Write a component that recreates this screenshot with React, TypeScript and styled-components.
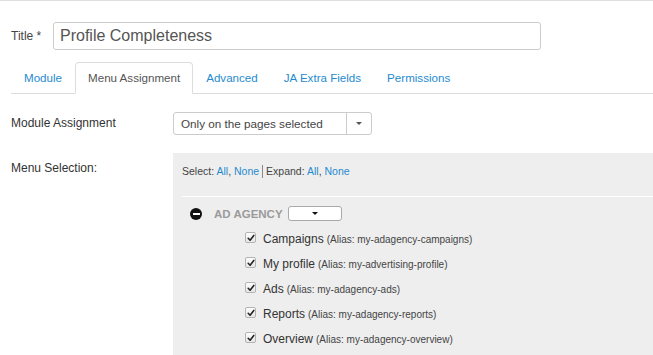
import React from 'react'
import styled, { createGlobalStyle } from 'styled-components'

const GlobalStyle = createGlobalStyle`
  html, body {
    margin: 0;
    padding: 0;
    background: #fff;
  }
  body {
    font-family: "Liberation Sans", Arial, sans-serif;
    color: #333;
    overflow: hidden;
  }
`

const Page = styled.div`
  border-top: 1px solid #dedede;
  padding-left: 11px;
  height: 354px;
  overflow: hidden;
`

const TitleRow = styled.div`
  display: flex;
  align-items: center;
  margin-top: 21px;

  label {
    width: 42px;
    font-size: 12px;
    color: #444;
  }

  input {
    box-sizing: border-box;
    width: 488px;
    height: 28px;
    border: 1px solid #ccc;
    border-radius: 3px;
    padding: 0 6px;
    font-family: inherit;
    font-size: 16px;
    color: #555;
    outline: none;
  }
`

const TabBar = styled.ul`
  display: flex;
  align-items: flex-start;
  list-style: none;
  margin: 12px 0 0;
  padding: 0;
  border-bottom: 1px solid #ddd;
  height: 31px;
`

const Tab = styled.li<{ $active?: boolean }>`
  box-sizing: border-box;
  height: ${(p) => (p.$active ? 32 : 31)}px;
  padding: 0 12px;
  line-height: 30px;
  font-size: 11.6px;
  cursor: pointer;
  color: ${(p) => (p.$active ? '#555' : '#1f8bd0')};
  border: 1px solid ${(p) => (p.$active ? '#ddd' : 'transparent')};
  border-bottom: ${(p) => (p.$active ? '1px solid #fff' : 'none')};
  border-radius: 4px 4px 0 0;
  background: ${(p) => (p.$active ? '#fff' : 'transparent')};
`

const FieldRow = styled.div<{ $top?: number }>`
  display: flex;
  align-items: flex-start;
  margin-top: ${(p) => p.$top ?? 18}px;
`

const FieldLabel = styled.div<{ $pad?: number }>`
  width: 162px;
  flex: none;
  font-size: 12px;
  color: #333;
  padding-top: ${(p) => p.$pad ?? 0}px;
`

const Select = styled.div`
  box-sizing: border-box;
  display: flex;
  width: 199px;
  height: 23px;
  border: 1px solid #ccc;
  border-radius: 3px;
  font-size: 11.7px;
  color: #444;

  .value {
    flex: 1;
    line-height: 21px;
    padding-left: 7px;
  }

  .toggle {
    width: 24px;
    border-left: 1px solid #ccc;
    display: flex;
    align-items: center;
    justify-content: center;
  }
`

const Caret = styled.span<{ $color?: string }>`
  width: 0;
  height: 0;
  border-left: 3px solid transparent;
  border-right: 3px solid transparent;
  border-top: 3px solid ${(p) => p.$color ?? '#555'};
`

const MenuPanel = styled.div`
  flex: 1;
  background: #eeeeee;
  padding-top: 10px;
  height: 210px;
`

const Links = styled.div`
  font-size: 10.5px;
  color: #444;
  line-height: 16px;
  padding-left: 9px;
  margin-bottom: 17px;

  a {
    color: #1f8bd0;
    text-decoration: none;
  }

  .sep {
    display: inline-block;
    width: 1px;
    height: 13px;
    background: #888;
    margin: 0 3px;
    vertical-align: -3px;
  }
`

const Tree = styled.div`
  margin-left: 9px;
  border-top: 1px solid #fff;
  padding: 5px 0 0 8px;
`

const GroupHeading = styled.div`
  display: flex;
  align-items: center;
  height: 23px;

  .title {
    margin-left: 12px;
    font-size: 11.5px;
    font-weight: bold;
    color: #9a9a9a;
  }
`

const MinusIcon = styled.span`
  position: relative;
  width: 12px;
  height: 12px;
  border-radius: 50%;
  background: #111;

  &::after {
    content: '';
    position: absolute;
    left: 2.5px;
    right: 2.5px;
    top: 5px;
    height: 2px;
    background: #fff;
  }
`

const MiniSelect = styled.span`
  box-sizing: border-box;
  width: 54px;
  height: 15px;
  margin-left: 5px;
  border: 1px solid #a9a9a9;
  border-radius: 3px;
  background: #fff;
  display: flex;
  align-items: center;
  justify-content: center;
`

const ItemList = styled.ul`
  list-style: none;
  margin: 0;
  padding: 0 0 0 55px;
`

const Item = styled.li`
  display: flex;
  align-items: center;
  height: 25px;
  gap: 7px;

  .name {
    font-size: 12px;
    color: #333;
    margin-right: 3px;
  }

  .alias {
    font-size: 10px;
    color: #444;
  }
`

const Check = styled.span`
  box-sizing: border-box;
  width: 11px;
  height: 11px;
  border: 1px solid #b3b3b3;
  border-radius: 2px;
  background: linear-gradient(#fdfdfd, #e6e6e6);
  display: flex;
  align-items: center;
  justify-content: center;
`

const CheckBox = () => (
  <Check>
    <svg width="8" height="8" viewBox="0 0 8 8">
      <path d="M1.2 4.3 L3.1 6.2 L6.8 1.4" fill="none" stroke="#222" strokeWidth="1.6" strokeLinecap="round" strokeLinejoin="round" />
    </svg>
  </Check>
)

const tabs = ['Module', 'Menu Assignment', 'Advanced', 'JA Extra Fields', 'Permissions']

const menuItems = [
  { name: 'Campaigns', alias: 'my-adagency-campaigns' },
  { name: 'My profile', alias: 'my-advertising-profile' },
  { name: 'Ads', alias: 'my-adagency-ads' },
  { name: 'Reports', alias: 'my-adagency-reports' },
  { name: 'Overview', alias: 'my-adagency-overview' },
]

export default function App() {
  return (
    <>
      <GlobalStyle />
      <Page>
        <TitleRow>
          <label>Title *</label>
          <input defaultValue="Profile Completeness" />
        </TitleRow>

        <TabBar>
          {tabs.map((t) => (
            <Tab key={t} $active={t === 'Menu Assignment'}>{t}</Tab>
          ))}
        </TabBar>

        <FieldRow $top={18}>
          <FieldLabel $pad={4}>Module Assignment</FieldLabel>
          <Select>
            <span className="value">Only on the pages selected</span>
            <span className="toggle"><Caret /></span>
          </Select>
        </FieldRow>

        <FieldRow $top={18}>
          <FieldLabel $pad={8}>Menu Selection:</FieldLabel>
          <MenuPanel>
            <Links>
              Select: <a href="#">All</a>, <a href="#">None</a>
              <span className="sep" />
              Expand: <a href="#">All</a>, <a href="#">None</a>
            </Links>
            <Tree>
              <GroupHeading>
                <MinusIcon />
                <span className="title">AD AGENCY</span>
                <MiniSelect><Caret $color="#111" /></MiniSelect>
              </GroupHeading>
              <ItemList>
                {menuItems.map((item) => (
                  <Item key={item.alias}>
                    <CheckBox />
                    <span>
                      <span className="name">{item.name}</span>
                      <span className="alias">(Alias: {item.alias})</span>
                    </span>
                  </Item>
                ))}
              </ItemList>
            </Tree>
          </MenuPanel>
        </FieldRow>
      </Page>
    </>
  )
}
